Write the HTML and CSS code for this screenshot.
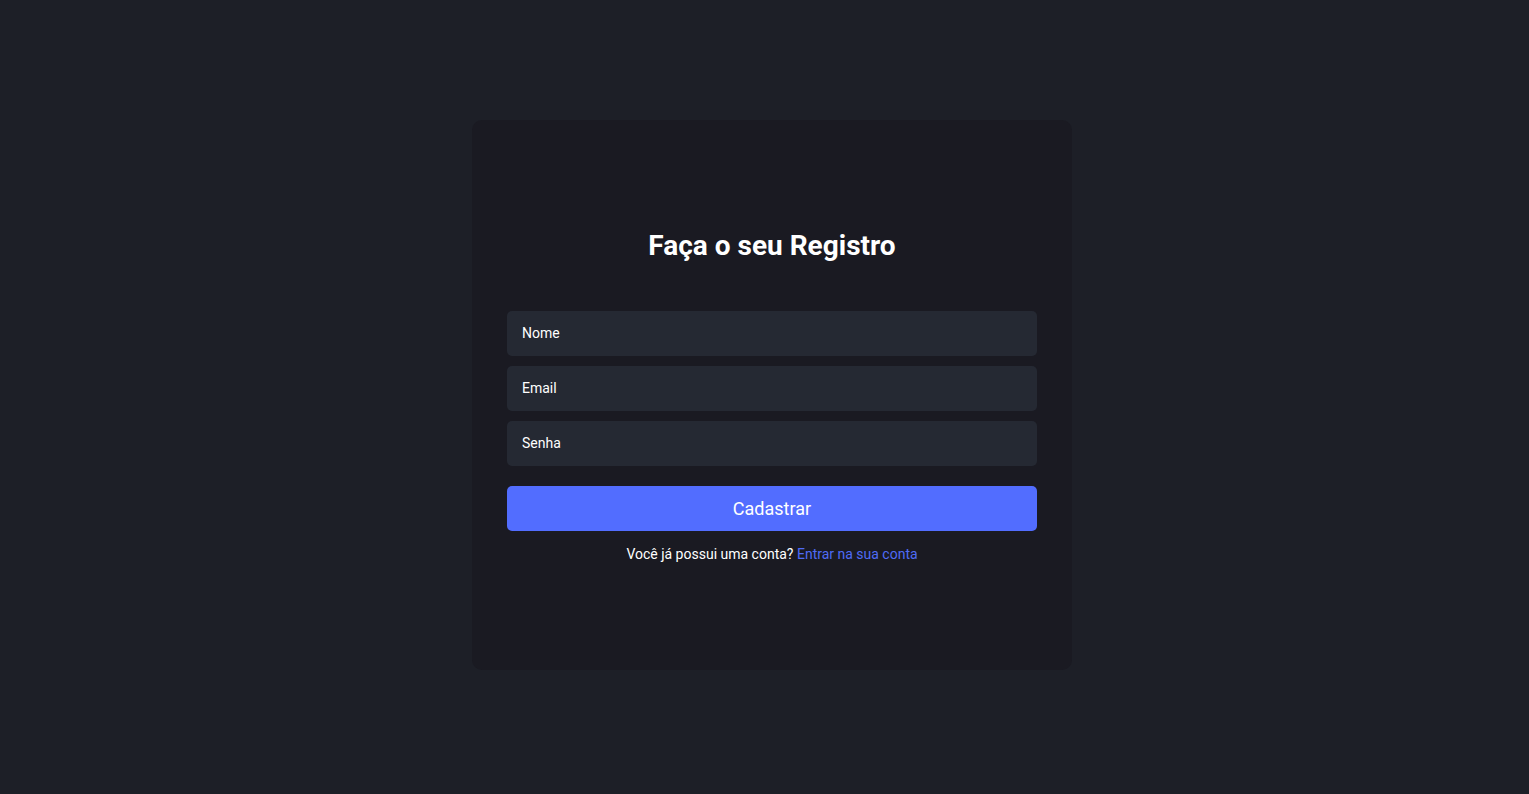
FILE: index.html
```html
<!DOCTYPE html>
<html lang="pt-BR">
<head>
<meta charset="utf-8">
<title>Registro</title>
<link rel="stylesheet" href="styles.css">
</head>
<body>
<main class="page">
  <section class="card">
    <h1 class="title">Faça o seu Registro</h1>
    <form class="form">
      <input class="field" type="text" placeholder="Nome">
      <input class="field" type="email" placeholder="Email">
      <input class="field" type="password" placeholder="Senha">
      <button class="submit" type="button">Cadastrar</button>
    </form>
    <p class="footer">Você já possui uma conta? <a class="link" href="#">Entrar na sua conta</a></p>
  </section>
</main>
</body>
</html>
```
FILE: styles.css
```css
* { box-sizing: border-box; }
html, body { margin: 0; height: 100%; }
body {
  background: #1d1f27;
  font-family: Roboto, "Liberation Sans", sans-serif;
  color: #ffffff;
}
.page {
  height: 100%;
  display: flex;
  justify-content: center;
  padding-top: 120px;
  padding-left: 15px;
}
.card {
  width: 600px;
  height: 550px;
  background: #1a1a22;
  border-radius: 10px;
  padding: 0 35px;
  display: flex;
  flex-direction: column;
  justify-content: center;
  align-items: stretch;
}
.title {
  margin: 0 0 47px;
  text-align: center;
  font-size: 28px;
  font-weight: 700;
  line-height: 36px;
  color: #ffffff;
}
.form {
  display: flex;
  flex-direction: column;
  gap: 10px;
}
.field {
  height: 45px;
  border: none;
  outline: none;
  border-radius: 5px;
  background: #252933;
  padding: 0 15px;
  font-family: inherit;
  font-size: 14px;
  color: #ffffff;
}
.field::placeholder { color: #ffffff; opacity: 1; }
.submit {
  margin-top: 10px;
  height: 45px;
  border: none;
  border-radius: 5px;
  background: #526dff;
  color: #ffffff;
  font-family: inherit;
  font-size: 18px;
  cursor: pointer;
}
.footer {
  margin: 14px 0 0;
  text-align: center;
  font-size: 14px;
  line-height: 18px;
  color: #ffffff;
}
.link {
  color: #4f6bf5;
  text-decoration: none;
}
```
